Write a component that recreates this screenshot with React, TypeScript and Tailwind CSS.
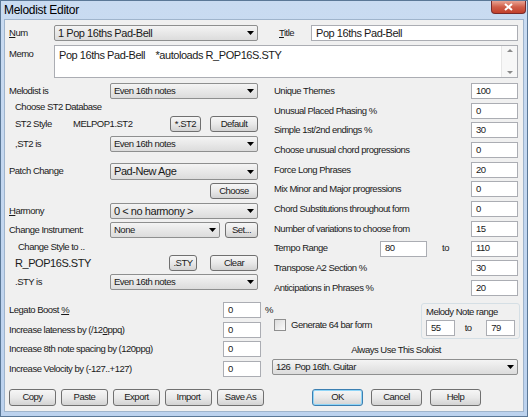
import React from 'react';

const Arrow = () => (
  <svg width="7" height="4" viewBox="0 0 7 4">
    <path d="M0 0h7L3.5 4z" fill="#000" />
  </svg>
);

const Combo = ({ text, className = '', big = false }: { text: string; className?: string; big?: boolean }) => (
  <div
    className={`flex items-center border border-[#8e8f8f] rounded-[2px] bg-gradient-to-b from-[#f4f4f4] to-[#dcdcdc] ${className}`}
  >
    <span className={`flex-1 px-[3px] whitespace-pre truncate ${big ? 'text-[11px] tracking-[-0.45px]' : 'text-[9.5px]'}`}>{text}</span>
    <span className="w-[14px] flex justify-center">
      <Arrow />
    </span>
  </div>
);

const Input = ({ value, className = '' }: { value: string; className?: string }) => (
  <div className={`flex items-center h-[16px] border border-[#abadb3] bg-white px-[4px] text-[9.5px] ${className}`}>{value}</div>
);

const Btn = ({ label, className = '', def = false }: { label: string; className?: string; def?: boolean }) => (
  <div
    className={`flex items-center justify-center rounded-[3px] border bg-gradient-to-b from-[#f6f6f6] via-[#e9e9e9] to-[#d3d3d3] text-[9.5px] ${
      def ? 'border-[#3c7fb1] shadow-[inset_0_0_0_1px_#8fd5f7]' : 'border-[#707070]'
    } ${className}`}
  >
    {label}
  </div>
);

const rightRows = [
  ['Unique Themes', '100'],
  ['Unusual Placed Phasing %', '0'],
  ['Simple 1st/2nd endings %', '30'],
  ['Choose unusual chord progressions', '0'],
  ['Force Long Phrases', '20'],
  ['Mix Minor and Major progressions', '0'],
  ['Chord Substitutions throughout form', '0'],
  ['Number of variations to choose from', '15'],
  ['TEMPO', '110'],
  ['Transpose A2 Section %', '30'],
  ['Anticipations in Phrases %', '20'],
];

export default function App() {
  return (
    <div className="w-[528px] h-[417px] flex flex-col bg-gradient-to-b from-[#c9dbf1] to-[#bcd2ee] border border-[#5b7897] text-[#1a1a1a] tracking-[-0.5px] font-['Liberation_Sans',sans-serif] overflow-hidden">
      {/* title bar */}
      <div className="h-[18px] flex items-start justify-between pl-[3px] pr-[1px]">
        <span className="text-[12px] leading-[18px] tracking-[-0.3px] text-black">Melodist Editor</span>
        <div className="w-[35px] h-[13px] rounded-b-[4px] border border-t-0 border-[#7a2a2a] bg-gradient-to-b from-[#e8a393] via-[#cf5d48] to-[#c2402c] flex items-center justify-center">
          <svg width="9" height="8" viewBox="0 0 9 8">
            <path d="M1 1l7 6M8 1L1 7" stroke="#fff" strokeWidth="2" />
          </svg>
        </div>
      </div>

      {/* body */}
      <div className="flex-1 mx-[3px] mb-[4px] bg-[#f0f0f0] border border-[#9fb4cc] pl-[4px] pt-[5px]">
        {/* Num / Title */}
        <div className="flex items-center h-[16px] text-[9.5px]">
          <span className="w-[45px]"><u>N</u>um</span>
          <Combo text="1 Pop 16ths Pad-Bell" big className="w-[204px] h-[16px]" />
          <span className="w-[21px]" />
          <span className="w-[32px]"><u>T</u>itle</span>
          <div className="w-[207px] h-[16px] flex items-center border border-[#abadb3] bg-white px-[4px] text-[11px] tracking-[-0.45px]">Pop 16ths Pad-Bell</div>
        </div>

        {/* Memo */}
        <div className="flex mt-[4px] h-[33px]">
          <span className="w-[45px] text-[9.5px] pt-[2px]">Memo</span>
          <div className="w-[464px] flex border border-[#abadb3] bg-white">
            <span className="flex-1 px-[4px] pt-[1px] text-[11px] tracking-[-0.45px] whitespace-pre">Pop 16ths Pad-Bell    *autoloads R_POP16S.STY</span>
            <div className="w-[16px] flex flex-col justify-between items-center py-[3px] bg-[#f7f7f7] border-l border-[#e6e6e6]">
              <svg width="6" height="3" viewBox="0 0 6 3"><path d="M0 3h6L3 0z" fill="#8a8a8a" /></svg>
              <svg width="6" height="3" viewBox="0 0 6 3"><path d="M0 0h6L3 3z" fill="#8a8a8a" /></svg>
            </div>
          </div>
        </div>

        {/* columns */}
        <div className="flex mt-[5px]">
          {/* left column */}
          <div className="w-[265px] flex flex-col text-[9.5px]">
            <div className="flex items-center h-[16px]">
              <span className="w-[101px]">Melodist is</span>
              <Combo text="Even 16th notes" className="w-[148px] h-[16px]" />
            </div>
            <div className="mt-[2px] h-[12px] pl-[6px] leading-[12px]">Choose ST2 Database</div>
            <div className="flex items-center h-[16px] mt-[3px] pl-[6px]">
              <span className="w-[58px]">ST2 Style</span>
              <span className="w-[97px]">MELPOP1.ST2</span>
              <Btn label="*.ST2" className="w-[31px] h-[16px]" />
              <Btn label="Default" className="w-[48px] h-[16px] ml-[9px]" />
            </div>
            <div className="flex items-center h-[16px] mt-[4px] pl-[6px]">
              <span className="w-[95px]">,ST2 is</span>
              <Combo text="Even 16th notes" className="w-[148px] h-[16px]" />
            </div>
            <div className="flex items-center h-[17px] mt-[11px]">
              <span className="w-[101px]">Patch Change</span>
              <Combo text="Pad-New Age" big className="w-[148px] h-[17px]" />
            </div>
            <div className="flex h-[16px] mt-[3px] pl-[201px]">
              <Btn label="Choose" className="w-[48px] h-[16px]" />
            </div>
            <div className="flex items-center h-[16px] mt-[4px]">
              <span className="w-[101px]"><u>H</u>armony</span>
              <Combo text="0 < no harmony >" big className="w-[148px] h-[16px]" />
            </div>
            <div className="flex items-center h-[16px] mt-[3px]">
              <span className="w-[101px]">Change Instrument:</span>
              <Combo text="None" className="w-[110px] h-[16px]" />
              <Btn label="Set..." className="w-[33px] h-[16px] ml-[5px]" />
            </div>
            <div className="mt-[3px] h-[12px] pl-[9px] leading-[12px]">Change Style to ..</div>
            <div className="flex items-center h-[16px] mt-[2px] pl-[6px]">
              <span className="w-[154px] text-[11px] tracking-[-0.45px]">R_POP16S.STY</span>
              <Btn label=".STY" className="w-[28px] h-[16px]" />
              <Btn label="Clear" className="w-[48px] h-[16px] ml-[13px]" />
            </div>
            <div className="flex items-center h-[16px] mt-[3px] pl-[6px]">
              <span className="w-[95px]">.STY is</span>
              <Combo text="Even 16th notes" className="w-[148px] h-[16px]" />
            </div>
            <div className="flex items-center h-[16px] mt-[12px]">
              <span className="w-[214px]">Legato Boost <u>%</u></span>
              <Input value="0" className="w-[38px]" />
              <span className="ml-[4px]">%</span>
            </div>
            <div className="flex items-center h-[16px] mt-[4px]">
              <span className="w-[214px]">Increase lateness by (/12<u>0</u>ppq)</span>
              <Input value="0" className="w-[38px]" />
            </div>
            <div className="flex items-center h-[16px] mt-[3px]">
              <span className="w-[214px]">Increase 8th note spacing by (120ppg)</span>
              <Input value="0" className="w-[38px]" />
            </div>
            <div className="flex items-center h-[16px] mt-[4px]">
              <span className="w-[214px]">Increase Velocity by (-127..+127)</span>
              <Input value="0" className="w-[38px]" />
            </div>
          </div>

          {/* right column */}
          <div className="w-[246px] flex flex-col text-[9.5px]">
            <div className="flex flex-col gap-[3.7px]">
              {rightRows.map(([label, value]) =>
                label === 'TEMPO' ? (
                  <div key={label} className="flex items-center h-[16px]">
                    <span className="w-[106px]">Tempo Range</span>
                    <Input value="80" className="w-[47px]" />
                    <span className="w-[44px] pl-[15px]">to</span>
                    <Input value={value} className="w-[47px]" />
                  </div>
                ) : (
                  <div key={label} className="flex items-center h-[16px]">
                    <span className="w-[197px]">{label}</span>
                    <Input value={value} className="w-[47px]" />
                  </div>
                )
              )}
            </div>
            <div className="flex items-center mt-[8px] h-[34px]">
              <div className="w-[148px] flex items-center gap-[5px] pt-[8px]">
                <span className="w-[12px] h-[12px] border border-[#8f8f8f] bg-gradient-to-br from-[#dcdcdc] to-[#fbfbfb]" />
                <span>Generate 64 bar form</span>
              </div>
              <div className="w-[99px] h-[36px] border border-[#d5dfe5] rounded-[3px] px-[4px] pt-[2px]">
                <div className="h-[12px] leading-[12px]">Melody Note range</div>
                <div className="flex items-center mt-[2px]">
                  <Input value="55" className="w-[29px]" />
                  <span className="w-[32px] pl-[10px]">to</span>
                  <Input value="79" className="w-[29px]" />
                </div>
              </div>
            </div>
            <div className="text-center h-[12px] leading-[12px] mt-[6px] -ml-[2px]">Always Use This Soloist</div>
            <Combo text="126  Pop 16th. Guitar" className="w-[246px] h-[16px] mt-[3px] -ml-[2px]" />
          </div>
        </div>

        {/* bottom buttons */}
        <div className="flex items-center mt-[12px] h-[17px]">
          <div className="flex gap-[5px]">
            <Btn label="Copy" className="w-[47px] h-[17px]" />
            <Btn label="Paste" className="w-[47px] h-[17px]" />
            <Btn label="Export" className="w-[47px] h-[17px]" />
            <Btn label="Import" className="w-[47px] h-[17px]" />
            <Btn label="Save As" className="w-[47px] h-[17px]" />
          </div>
          <div className="flex gap-[8px] ml-[48px]">
            <Btn label="OK" def className="w-[51px] h-[17px]" />
            <Btn label="Cancel" className="w-[51px] h-[17px]" />
            <Btn label="Help" className="w-[51px] h-[17px]" />
          </div>
        </div>
      </div>
    </div>
  );
}
